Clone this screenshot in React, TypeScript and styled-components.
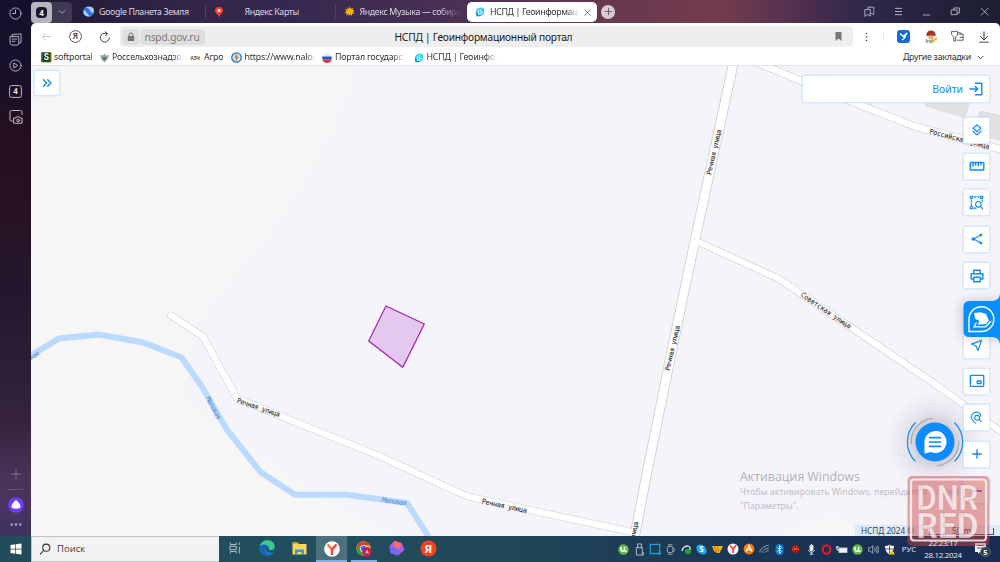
import React from "react";
import styled, { createGlobalStyle } from "styled-components";

const GlobalStyle = createGlobalStyle`
  * { box-sizing: border-box; }
  html, body { margin: 0; padding: 0; }
  body { width: 1000px; height: 562px; overflow: hidden; font-family: "Noto Sans", sans-serif; }
  svg { display: block; flex: none; }
`;

const UI = `"Noto Sans", sans-serif`;
const BLUE = "#0d8bff";

const Desktop = styled.div`
  display: grid;
  grid-template-rows: 536px 26px;
  width: 1000px;
  height: 562px;
  overflow: hidden;
`;

const Browser = styled.div`
  display: grid;
  grid-template-columns: 31px 969px;
  min-height: 0;
  background: linear-gradient(90deg, #15122a 0, #241c38 70px, #33264a 200px, #36294f 300px, #4a3053 450px, #66384f 590px, #733c4e 720px, #5a3350 780px, #33294a 850px, #26233e 920px, #1d1f33 1000px);
`;

const Rail = styled.aside`
  display: flex;
  flex-direction: column;
  align-items: center;
  padding-top: 6px;
  color: #bdb9c6;
  background: linear-gradient(180deg, #14122a 0, #15112a 60px, #240f1f 130px, #281222 200px, #23182f 300px, #35233d 420px, #4a3458 480px, #473560 510px, #3d3160 536px);
`;

const RailItem = styled.div<{ $h: number }>`
  display: flex;
  align-items: center;
  justify-content: center;
  height: ${(p) => p.$h}px;
`;

const RailSpacer = styled.div`
  flex: 1;
`;

const RailRule = styled.div`
  width: 15px;
  height: 1px;
  background: #6a5777;
`;

const Main = styled.div`
  display: grid;
  grid-template-rows: 23px 27px 16px 470px;
  min-width: 0;
`;

const TabStrip = styled.div`
  display: flex;
  align-items: center;
  color: #dcd8e2;
  font: 8.8px/12px ${UI};
  letter-spacing: -0.36px;
`;

const TabGroup = styled.div`
  display: flex;
  align-items: center;
  width: 41px;
  height: 21px;
  margin: 1px 0 0 0;
  border-radius: 4px;
  background: rgba(255, 255, 255, 0.13);
`;

const GroupChip = styled.div`
  display: flex;
  align-items: center;
  justify-content: center;
  width: 21px;
  height: 21px;
  border-radius: 4px;
  background: #b7b4be;
`;

const GroupCount = styled.div`
  width: 11px;
  height: 11px;
  border-radius: 4px;
  background: #1c1730;
  color: #fff;
  font: bold 8px/11px ${UI};
  letter-spacing: 0;
  text-align: center;
`;

const GroupArrow = styled.div`
  display: flex;
  flex: 1;
  justify-content: center;
  color: #a59fb2;
`;

const Tab = styled.div<{ $w: number; $pad: number; $gap: number; $line?: boolean }>`
  display: flex;
  align-items: center;
  width: ${(p) => p.$w}px;
  height: 13px;
  padding-left: ${(p) => p.$pad}px;
  gap: ${(p) => p.$gap}px;
  border-right: 1px solid ${(p) => (p.$line ? "#4f4264" : "transparent")};
  overflow: hidden;
  white-space: nowrap;
`;

const TabText = styled.span<{ $fade?: string; $w?: number }>`
  display: block;
  overflow: hidden;
  white-space: nowrap;
  width: ${(p) => (p.$w ? p.$w + "px" : "auto")};
  ${(p) => p.$fade && `mask-image: linear-gradient(90deg, #000 ${p.$fade}, transparent);`}
`;

const ActiveTab = styled.div`
  display: flex;
  align-items: center;
  width: 130px;
  height: 20px;
  padding-left: 8px;
  gap: 5px;
  margin-top: 1px;
  border-radius: 5px;
  background: #fff;
  color: #333;
`;

const NewTab = styled.div`
  display: flex;
  align-items: center;
  justify-content: center;
  width: 14px;
  height: 14px;
  margin-left: 4px;
  border-radius: 50%;
  background: #d6cbd3;
  color: #554a55;
`;

const WindowControls = styled.div`
  display: flex;
  align-items: center;
  gap: 17.8px;
  margin-left: auto;
  padding-right: 10px;
  color: #c9c6d0;
`;

const AddressBar = styled.div`
  display: flex;
  align-items: center;
  padding-left: 10px;
  border-radius: 5px 5px 0 0;
  background: #fff;
  color: #333;
`;

const NavIcons = styled.div`
  display: flex;
  align-items: center;
  gap: 17px;
  width: 79px;
`;

const UrlField = styled.div`
  display: flex;
  align-items: center;
  width: 733px;
  height: 21px;
  border-radius: 4px;
  background: #eee;
`;

const Lock = styled.div`
  display: flex;
  align-items: center;
  justify-content: center;
  width: 17px;
  height: 16px;
  margin-left: 2px;
  border-radius: 4px;
  background: #dfdfdf;
  color: #777;
`;

const Host = styled.div`
  width: 65px;
  height: 16px;
  margin-left: 1px;
  padding-left: 4.5px;
  border-radius: 4px;
  background: #dfdfdf;
  color: #777;
  font: 10.1px/16px ${UI};
  letter-spacing: -0.1px;
`;

const PageTitle = styled.div`
  margin-left: 189.5px;
  color: #1a1a1a;
  font: 10.2px/20px ${UI};
  letter-spacing: -0.22px;
  white-space: nowrap;
`;

const FieldEnd = styled.div`
  margin: 0 10px 0 auto;
`;

const Extensions = styled.div`
  display: flex;
  align-items: center;
  justify-content: space-between;
  flex: 1;
  padding: 0 10px 0 11px;
`;

const Bookmarks = styled.div`
  display: flex;
  align-items: flex-start;
  padding: 1px 16px 0 10px;
  border-bottom: 1px solid #e4e4e8;
  background: #fff;
  color: #333;
  font: 8.8px/13px ${UI};
  letter-spacing: -0.2px;
`;

const Bookmark = styled.div<{ $w: number; $gap?: number }>`
  display: flex;
  align-items: center;
  width: ${(p) => p.$w}px;
  height: 13px;
  gap: ${(p) => p.$gap ?? 2.5}px;
`;

const OtherBookmarks = styled.div`
  display: flex;
  align-items: center;
  gap: 6px;
  height: 13px;
  margin-left: auto;
  letter-spacing: -0.25px;
`;

const MapView = styled.div`
  position: relative;
  overflow: hidden;
  background: #f6f6f6;
`;

const Panel = styled.div`
  display: flex;
  align-items: center;
  justify-content: center;
  border: 1px solid #d3e7fd;
  border-radius: 2.5px;
  background: #fff;
  box-shadow: 0 0 2px rgba(120, 170, 230, 0.3);
  color: ${BLUE};
`;

const ExpandButton = styled(Panel)`
  position: absolute;
  left: 3px;
  top: 4px;
  width: 26px;
  height: 26px;
`;

const LoginBar = styled(Panel)`
  position: absolute;
  right: 10px;
  top: 9px;
  width: 188px;
  height: 28px;
  justify-content: flex-end;
  gap: 6px;
  padding: 0 6px 1px 0;
  font: 10.4px/14px ${UI};
`;

const Tools = styled.div<{ $top: number }>`
  position: absolute;
  right: 10px;
  top: ${(p) => p.$top}px;
  display: flex;
  flex-direction: column;
  gap: 9.4px;
`;

const Tool = styled(Panel)`
  width: 27px;
  height: 27px;
`;

const SideTab = styled.div`
  position: absolute;
  right: 0;
  top: 226px;
  filter: drop-shadow(-2px 0 6px rgba(60, 50, 80, 0.25));
`;

const Chat = styled.div`
  position: absolute;
  right: 13px;
  top: 324px;
`;

const Activation = styled.div`
  position: absolute;
  left: 709px;
  top: 403px;
  color: #bbbabf;
  font: 8.75px/13.5px "Open Sans", sans-serif;
  letter-spacing: 0.03px;
  white-space: pre;
`;

const ActivationTitle = styled.div`
  margin-bottom: 1px;
  color: #b2b1b6;
  font-size: 12.3px;
  line-height: 16px;
`;

const ScaleBar = styled.div`
  position: absolute;
  right: 0;
  bottom: 0;
  display: flex;
  align-items: center;
  width: 145px;
  height: 11px;
  padding-left: 6px;
  background: #dcebfb;
  color: #3a404a;
  font: 8.2px/11px ${UI};
  white-space: nowrap;
`;

const Ruler = styled.div`
  width: 65px;
  height: 7px;
  margin-left: 15px;
  margin-top: 1px;
  border: 1px solid #4b5460;
  border-top: 0;
  line-height: 5px;
  text-align: center;
`;

const Stamp = styled.div`
  position: absolute;
  left: 907px;
  top: 475px;
  z-index: 3;
`;

const StampLetters = styled.g`
  font: bold 35px Roboto, sans-serif;
  fill: #fff;
  fill-opacity: 0.7;
  stroke: rgba(140, 70, 75, 0.35);
  stroke-width: 0.5px;
`;

const Taskbar = styled.div`
  display: flex;
  align-items: stretch;
  background: linear-gradient(90deg, #224b5b 0, #234e5d 330px, #214659 500px, #1c3a54 680px, #193055 850px, #182b53 1000px);
`;

const Start = styled.div`
  display: flex;
  align-items: center;
  justify-content: center;
  width: 31px;
`;

const Search = styled.div`
  display: flex;
  align-items: center;
  gap: 6.5px;
  width: 187.5px;
  padding-left: 6.5px;
  border: 1px solid #bfc3c4;
  border-right: 0;
  background: #f2f2f2;
  color: #3d3d3d;
  font: 9.5px/14px "Open Sans", sans-serif;
`;

const TaskButton = styled.div<{ $on?: boolean; $run?: boolean }>`
  display: flex;
  align-items: center;
  justify-content: center;
  width: ${(p) => (p.$on ? 31 : p.$run ? 26 : 31)}px;
  margin: 0 ${(p) => (p.$run ? 3.2 : 0.7)}px;
  padding-top: ${(p) => (p.$on || p.$run ? 2 : 0)}px;
  border-bottom: 2px solid ${(p) => (p.$on || p.$run ? "#76b5e8" : "transparent")};
  background: ${(p) => (p.$on ? "#4d707d" : "transparent")};
  background-clip: padding-box;
`;

const Tray = styled.div`
  display: flex;
  align-items: center;
  margin-left: auto;
  color: #e8edf2;
`;

const TrayIcon = styled.div`
  display: flex;
  align-items: center;
  justify-content: center;
  width: 15.63px;
`;

const Lang = styled.div`
  width: 24px;
  font: 7.8px/12px "Open Sans", sans-serif;
  text-align: center;
`;

const Clock = styled.div`
  position: relative;
  z-index: 4;
  width: 44px;
  font: 7.9px/12px "Open Sans", sans-serif;
  letter-spacing: -0.25px;
  text-align: center;
`;

const Notices = styled.div`
  display: flex;
  justify-content: center;
  width: 35px;
`;

type P = { children?: React.ReactNode; s?: number; w?: number; color?: string; sw?: number; vb?: string };
const Line = ({ children, s = 14, w, color = "currentColor", sw = 1, vb = "0 0 14 14" }: P) => (
  <svg width={w ?? s} height={s} viewBox={vb} fill="none" stroke={color} strokeWidth={sw} strokeLinejoin="round" strokeLinecap="round">
    {children}
  </svg>
);

const Portal = ({ s = 10 }: { s?: number }) => (
  <svg width={s} height={s} viewBox="0 0 10 10">
    <path d="M3 1Q7 0 9 1.500q.8 3-.2 5.500Q7 9.500 1.500 9.300.3 6 1 3.500Z" fill="#3fd0fb" />
    <path d="M1 4.500Q.6 7 1.500 9.300 5 9.400 7 8.500L3.500 7.500Z" fill="#1a8df2" />
    <path d="M3.500 3v4.300h3.300M5.300 2.300v3.200h2.500" stroke="#d9f8ff" strokeWidth=".9" fill="none" />
  </svg>
);

const Label = ({ x, y, a, len, c = "#333", children }: { x: number; y: number; a: number; len: number; c?: string; children: string }) => (
  <text
    transform={`translate(${x} ${y}) rotate(${a})`}
    y={2.2}
    textAnchor="middle"
    textLength={len}
    fontFamily="'DejaVu Sans Mono', monospace"
    fontSize={6.7}
    fill={c}
    stroke={c}
    strokeWidth={0.12}
    xmlSpace="preserve"
  >
    {children}
  </text>
);

const roads = [
  { d: "M171 315.500 203 336.500 237 398.500 382 457 466 496 636 533", w: 6, c: "#dcdcdf" },
  { d: "M695 240.500 778 278.300 935 384 1003 433", w: 6, c: "#d8d8db" },
  { d: "M740 56 765 66 860 105 915 126.500 1003 150", w: 6.500, c: "#d8d8db" },
  { d: "M735 56 695 240 673 345 645.500 480 634 540", w: 8.600, c: "#cbcbce" },
];

const MapDrawing = () => (
  <svg width="969" height="470" viewBox="31 66 969 470">
    <path d="M352 66v16l-17 43-35 65-30 45-38 42-28 38-14 30-6 50 31 30 47 30 58 45 80 36h380l52-24 38 24H1000V66Z" fill="#f5f4fb" />
    <path d="M926 106 965 117.500 970 100 930 90ZM980 111 1001 116V140L974 133Z" fill="#e2e2e2" stroke="#d6d6d6" strokeWidth=".7" />
    <path d="M27 358 59 338.500 99 334.500 143 342.500 181.500 357.500 201.500 386 226.500 429 260.500 472 295 494.800H347L407 503 430 539" fill="none" stroke="#bbdaff" strokeWidth="6" />
    {roads.map((r) => (
      <path key={r.d} d={r.d} fill="none" stroke={r.c} strokeWidth={r.w + 1.600} strokeLinejoin="round" strokeLinecap="round" />
    ))}
    {roads.map((r) => (
      <path key={r.d} d={r.d} fill="none" stroke="#fff" strokeWidth={r.w} strokeLinejoin="round" strokeLinecap="round" />
    ))}
    <path d="M386 306 424.300 324 402.800 367.300 368.700 341Z" fill="#e5c8ee" stroke="#a51fb8" strokeWidth="1.200" />
    <Label x={258.500} y={407.5} a={19} len={45}>Речная улица</Label>
    <Label x={504.500} y={506} a={12} len={46}>Речная улица</Label>
    <Label x={714} y={152} a={-77} len={46}>Речная улица</Label>
    <Label x={672.500} y={348} a={-77} len={46}>Речная улица</Label>
    <Label x={631.500} y={544} a={-78} len={46}>Речная улица</Label>
    <Label x={826} y={310.500} a={34} len={59}>Советская улица</Label>
    <Label x={959.5} y={139} a={14.5} len={62}>Российская улица</Label>
    <Label x={213.500} y={408} a={62} len={25} c="#5d97d3">Меловая</Label>
    <Label x={394.500} y={501.500} a={8} len={25} c="#5d97d3">Меловая</Label>
    <Label x={28} y={359} a={-30} len={25} c="#5d97d3">Меловая</Label>
  </svg>
);

const Uto = () => (
  <svg width="11" height="11" viewBox="0 0 11 11">
    <circle cx="5.500" cy="5.500" r="5.200" fill="#65b944" />
    <path d="M3 3v2.500Q3.200 7.500 5.500 7.200 7 7 6.500 3M6.800 6.500 8.500 7.800" stroke="#fff" strokeWidth="1.500" fill="none" />
  </svg>
);

const trayIcons: React.ReactNode[] = [
  <Uto />,
  <Line s={13} color="#b9c6cf"><path d="M4 5h6v8H4ZM5 5V1h4v4M11 10v3" /></Line>,
  <Line s={12} color="#17a5e8" sw={1.4}><path d="M1.500 1.500h11v11h-11z" strokeDasharray="2 1" /><path d="M10 12h4M12 10v4" /></Line>,
  <Line s={11} color="#b9c6cf"><rect x="3" y="3" width="7" height="8" rx="2" /><path d="M4 1h5M4 13h5M11 5q3 2 0 5" /></Line>,
  <svg width="11" height="11" viewBox="0 0 11 11"><path d="M1 7Q2 2 7 2q3 1 2 4L4 7" fill="none" stroke="#dce3e7" strokeWidth="1.300" /><circle cx="7" cy="7.500" r="2.800" fill="#20a43b" /></svg>,
  <svg width="11" height="11" viewBox="0 0 11 11"><circle cx="4" cy="4" r="3.600" fill="#18aaf0" /><circle cx="7" cy="7" r="3.600" fill="#18aaf0" /><circle cx="5.500" cy="5.500" r="4.300" fill="#18aaf0" /><text x="5.500" y="8.300" textAnchor="middle" fontSize="8" fontWeight="bold" fontFamily="Open Sans" fill="#fff">S</text></svg>,
  <svg width="11" height="9" viewBox="0 0 11 9"><path d="M0 1h11L7.500 8H5L2 6Z" fill="#ffb100" /><path d="m2 1 3 6M5 1l2 5" stroke="#a36000" strokeWidth=".7" /></svg>,
  <svg width="12" height="12" viewBox="0 0 12 12"><circle cx="6" cy="6" r="5.500" fill="#fff" /><path d="M3 2.500 6 6v4M9 2.500 6 6" fill="none" stroke="#f33" strokeWidth="1.700" /></svg>,
  <svg width="12" height="12" viewBox="0 0 12 12"><circle cx="6" cy="6" r="5.400" fill="#ff7a00" /><path d="m3 8.500 3-6 3 6M4 7q3-2 4 1" fill="none" stroke="#fff" strokeWidth="1.200" /></svg>,
  <Line s={10} color="#aab8c6" sw={1.1}><path d="M1 11Q3 3 13 2M4 12q2-6 9-6M8 12q1-3 5-3" /></Line>,
  <svg width="9" height="11" viewBox="0 0 9 11"><rect x=".5" width="8" height="11" rx="4" fill="#0b7be0" /><path d="m2.500 3.500 4 4-2 2v-8l2 2-4 4" fill="none" stroke="#fff" strokeWidth=".8" /></svg>,
  <svg width="11" height="11" viewBox="0 0 11 11"><circle cx="5.500" cy="5" r="3.800" fill="#d8301a" /><path d="m1 2 9 7M10 2 1 9M5.500 1v9" stroke="#6b1010" /><path d="M4 4h3v2H4z" fill="#e8541e" /></svg>,
  <Line s={11} color="#e6ebef"><rect x="5" y="1" width="4" height="8" rx="2" fill="#e6ebef" /><path d="M3 8q4 6 8 0M7 11v2M5 13h4" /></Line>,
  <svg width="11" height="11" viewBox="0 0 11 11"><ellipse cx="5.500" cy="5.500" rx="3.800" ry="4.200" fill="none" stroke="#f01828" strokeWidth="2" /></svg>,
  <svg width="12" height="9" viewBox="0 0 12 9"><rect x="3" y="3" width="8" height="4.500" fill="#eef2f4" stroke="#cfd6db" strokeWidth=".8" /><path d="M1 1v4h2M0 2h3" stroke="#e8edf0" fill="none" /></svg>,
  <Uto />,
  <Line s={11} color="#b6c3cf"><path d="M1 5h2l3-3v10L3 9H1ZM8.500 5q1.500 2 0 4M10.500 3.500q2.500 3.500 0 7M12.500 2.500q3 4.500 0 9" /></Line>,
  <svg width="11" height="11" viewBox="0 0 11 11"><path d="M1 2q3 0 4.500-1.500Q7 2 10 2q0 6-4.500 8.500Q1 8 1 2" fill="#fff" /><path d="M5.500 1v9M1 5h9" stroke="#26384f" strokeWidth=".8" /><path d="m8 5.500 3 5H5Z" fill="#ffc400" /></svg>,
];

const toolIcons: React.ReactNode[] = [
  <Line s={12} color={BLUE} sw={1.3}><path d="m7 1 4.500 4L7 9 2.500 5ZM2.200 8.500 7 12.700l4.800-4.200" /></Line>,
  <Line s={14} w={16} vb="0 0 16 14" color={BLUE} sw={1.4}><rect x="1.200" y="3.500" width="13.600" height="7.500" rx=".8" /><path d="M4 4v3M6.600 4v2M9.300 4v3M12 4v2" /></Line>,
  <Line s={15} color={BLUE} sw={1.05}><circle cx="2.200" cy="2.200" r="1.200" /><circle cx="11.800" cy="2.200" r="1.200" /><circle cx="2.200" cy="11.800" r="1.200" /><path d="M4.500 1.700h2M8 1.700h1.500M2.200 4.500v2M2.200 8v1.500M4.500 12.300h2M12.300 4.500v2" /><circle cx="8.800" cy="8.700" r="2.600" /><path d="m10.700 10.700 2 2.300" /></Line>,
  <Line s={12} color={BLUE} sw={1.3}><path d="M11 2.500 3 7l8 4.500" /><circle cx="11.500" cy="2.300" r="1" fill={BLUE} /><circle cx="2.600" cy="7" r="1.300" fill={BLUE} /><circle cx="11.500" cy="11.700" r="1" fill={BLUE} /></Line>,
  <Line s={14} color={BLUE} sw={1.4}><path d="M3.800 4.500V1.300h6.400v3.200M3.800 10H1.200V4.700h11.600V10h-2.600M3.800 8.200h6.400v4.500H3.800Z" /></Line>,
];

const lowerTools: React.ReactNode[] = [
  <Line s={13} color={BLUE} sw={1.2}><path d="M12.500 1.500 8.500 12.500 6.500 7.500 1.500 5.500Z" /></Line>,
  <Line s={14} w={16} vb="0 0 16 14" color={BLUE} sw={1.3}><rect x="1.300" y="1.300" width="13.400" height="11" rx=".7" /><rect x="8.300" y="7" width="3.800" height="2.500" /></Line>,
  <Line s={13} color={BLUE} sw={1.2}><path d="M4 11.500Q-.5 7 2.500 3.500 6-.500 10 2.500q1.500 1 1.700 3M6 13l-1-.8" /><circle cx="7.700" cy="7.300" r="2.600" /><path d="m9.800 9.300 2.200 2.200" /></Line>,
  <Line s={12} color={BLUE} sw={1.5}><path d="M2 7h10M7 2v10" /></Line>,
  <Line s={12} color="#0066dd" sw={1.8}><path d="M2 7h10" /></Line>,
];

export default function App() {
  return (
    <>
      <GlobalStyle />
      <Desktop>
        <Browser>
          <Rail>
            <RailItem $h={14}><Line s={13}><circle cx="7" cy="7" r="6" /><path d="M7 3.500V7H4" /></Line></RailItem>
            <RailItem $h={38}><Line s={13}><path d="M3.500 3.500V1.500L13 1v9l-2 1M1.500 3.800h9V12l-1 1h-7l-1-1ZM3.500 6.500h5M3.500 9h3" /></Line></RailItem>
            <RailItem $h={14}><Line s={13}><circle cx="7" cy="7" r="6" /><path d="m5.500 4.500 4 2.500-4 2.500Z" /></Line></RailItem>
            <RailItem $h={38}>
              <svg width="13" height="13" viewBox="0 0 13 13"><rect x=".6" y=".6" width="11.800" height="11.800" rx="2" fill="none" stroke="currentColor" /><text x="6.500" y="9.400" textAnchor="middle" fontFamily="Open Sans" fontWeight="bold" fontSize="8" fill="#e6e3ea">4</text></svg>
            </RailItem>
            <RailItem $h={14}><Line s={14}><path d="M3.500 11H2.500Q1 11 1 9.500V2Q1 .5 2.500.5h9Q13 .5 13 2v2.500M5 8h2l.8-1.200h2.600L11.200 8H13v5.200H5Z" /><circle cx="9.100" cy="10.400" r="1.300" /></Line></RailItem>
            <RailSpacer />
            <RailItem $h={30}><Line s={12} color="#8d7f9a"><path d="M1.500 7h11M7 1.500v11" /></Line></RailItem>
            <RailRule />
            <RailItem $h={30}>
              <svg width="16" height="16" viewBox="0 0 16 16"><circle cx="8" cy="8" r="7.800" fill="#7239ff" /><path d="M8 3.200q1.600 0 4.500 5.500.8 3-4.500 3T3.500 8.700Q6.400 3.200 8 3.200" fill="#fff" /></svg>
            </RailItem>
            <RailItem $h={8}>
              <svg width="12" height="3" viewBox="0 0 12 3" fill="#aaa2b8"><circle cx="1.700" cy="1.500" r="1.300" /><circle cx="6" cy="1.500" r="1.300" /><circle cx="10.300" cy="1.500" r="1.300" /></svg>
            </RailItem>
            <RailItem $h={8} />
          </Rail>

          <Main>
            <TabStrip>
              <TabGroup>
                <GroupChip><GroupCount>4</GroupCount></GroupChip>
                <GroupArrow><Line s={8}><path d="m2 5 5 4 5-4" strokeWidth="1.700" /></Line></GroupArrow>
              </TabGroup>
              <Tab $w={134} $pad={11} $gap={5} $line>
                <svg width="11" height="11" viewBox="0 0 11 11"><circle cx="5.500" cy="5.500" r="5.300" fill="#2d75e5" /><path d="M.5 4Q3 5 4 7t3 3.300Q2 11 .5 7M3 1l3 2 2 3 2.500 1.500Q12 2 8 .8" fill="#a9d0ff" /></svg>
                <TabText>Google Планета Земля</TabText>
              </Tab>
              <Tab $w={130} $pad={8} $gap={20.5} $line>
                <svg width="10" height="12" viewBox="0 0 10 12"><path d="M5 1Q9 1 9 4.500 9 7 6 9L5 11.500 4 9Q1 7 1 4.500 1 1 5 1" fill="#f8402b" /><circle cx="5" cy="4.500" r="1.500" fill="#fff" /></svg>
                <TabText>Яндекс Карты</TabText>
              </Tab>
              <Tab $w={131} $pad={7.5} $gap={5}>
                <svg width="11" height="11" viewBox="0 0 11 11"><path d="m1 3 3 1L2.500 1 5 3 5.500.5 7 3l2-1.500L8.500 4l2 .5-1.500 1.500 1.500 2-2.500-.5L8 10 6 8l-1 2.500L4.500 8 2 9.500l1-2.500H0l2.500-1.500Z" fill="#ffb500" /></svg>
                <TabText $w={101} $fade="78%">Яндекс Музыка — собираем</TabText>
              </Tab>
              <ActiveTab>
                <Portal s={10} />
                <TabText $w={89} $fade="86%">НСПД | Геоинформационный</TabText>
                <Line s={7} color="#555" sw={1.5}><path d="M1.500 1.500 12.500 12.500M12.500 1.500 1.500 12.500" /></Line>
              </ActiveTab>
              <NewTab><Line s={9} sw={1.3}><path d="M2 7h10M7 2v10" /></Line></NewTab>
              <WindowControls>
                <Line s={11}><path d="M1.500 4.500h6.500V13L4.800 10.500 1.500 13ZM5 4V1.500h7.500v9.300L9 9.500" /></Line>
                <Line s={11} sw={1.1}><path d="M3 3h8M3 7h8M3 11h8" /></Line>
                <Line s={11}><path d="M3 11.500h8" /></Line>
                <Line s={11}><path d="M2 5h7v6H2ZM5 5V2.500h7V9H9" /></Line>
                <Line s={11}><path d="m3 3 8.500 8.500M11.500 3 3 11.500" /></Line>
              </WindowControls>
            </TabStrip>

            <AddressBar>
              <NavIcons>
                <Line s={11} color="#c4c4c4" sw={1.2}><path d="M12 7H2M6 2.500 2 7l4 4.500" /></Line>
                <svg width="13" height="13" viewBox="0 0 13 13"><circle cx="6.500" cy="6.500" r="5.900" fill="none" stroke="#444" strokeWidth=".9" /><text x="6.400" y="9.400" textAnchor="middle" fontFamily="Open Sans" fontSize="8" fontWeight="600" fill="#333">Я</text></svg>
                <Line s={12} color="#333" sw={1.1}><path d="M12 8.200A5.200 5.200 0 1 1 8 2.700L9.500 3M7.300.8 9.700 3 7.600 5.400" /></Line>
              </NavIcons>
              <UrlField>
                <Lock><svg width="8" height="10" viewBox="0 0 8 10"><rect x=".8" y="4" width="6.400" height="5" rx=".5" fill="currentColor" /><path d="M2.200 4V2.700q0-1.700 1.800-1.700t1.800 1.700V4" fill="none" stroke="currentColor" /></svg></Lock>
                <Host>nspd.gov.ru</Host>
                <PageTitle>НСПД | Геоинформационный портал</PageTitle>
                <FieldEnd><svg width="9" height="11" viewBox="0 0 9 11"><path d="M1.500 1h6v9l-3-2.500-3 2.500Z" fill="#777" /></svg></FieldEnd>
              </UrlField>
              <Extensions>
                <svg width="5" height="10" viewBox="0 0 5 10" fill="#444"><circle cx="2.500" cy="1.500" r=".8" /><circle cx="2.500" cy="5" r=".8" /><circle cx="2.500" cy="8.500" r=".8" /></svg>
                <svg width="1" height="9"><rect width="1" height="9" fill="#eaeaea" /></svg>
                <svg width="13" height="13" viewBox="0 0 13 13"><rect width="13" height="13" rx="3" fill="#176bd8" /><path d="m3 3.500 3.500 3L10 3 7 8.500 5 10" fill="none" stroke="#fff" strokeWidth="1.400" /></svg>
                <svg width="14" height="14" viewBox="0 0 14 14"><path d="M2.500 4Q3 .5 7 .5T11.500 4v2h-9Z" fill="#a23a28" /><path d="M4.500 5.500h5V9h-5Z" fill="#efae77" /><path d="m1 9 4 1-1 3H2ZM5 10l4-1v4H5Z" fill="#9eabb8" /><path d="m8 12 5-4" stroke="#eebb18" strokeWidth="2" /></svg>
                <Line s={13} color="#555"><path d="M1 1.500h6v4L5 7.500V12H3V7.500L1 5.500ZM8.500 4.500H13V11H7M7.500 3h3l1 1.500M10 8h3" /></Line>
                <Line s={12} color="#333" sw={1.1}><path d="M7 1v9M3 6.500 7 10.500 11 6.500M2 13h10" /></Line>
              </Extensions>
            </AddressBar>

            <Bookmarks>
              <Bookmark $w={59}>
                <svg width="10.500" height="10.500" viewBox="0 0 10 10"><rect width="10" height="10" rx="1" fill="#4f803e" /><rect x="1.500" y="1" width="7" height="8" fill="#193115" /><text x="5" y="8" textAnchor="middle" fontFamily="Roboto" fontSize="8" fontWeight="bold" fill="#fff">S</text></svg>
                <TabText>softportal</TabText>
              </Bookmark>
              <Bookmark $w={90} $gap={3}>
                <svg width="9" height="10" viewBox="0 0 9 10"><path d="m0 2 3 .5L4.500.5 6 2.500 9 2 7.500 6.500 5.500 8l-1 2-1-2-2-1.500Z" fill="#98a3a0" /><path d="M3 4h3v3H3z" fill="#43855b" /></svg>
                <TabText $w={71} $fade="85%">Россельхознадзор</TabText>
              </Bookmark>
              <Bookmark $w={41} $gap={4}>
                <svg width="10" height="6" viewBox="0 0 10 6"><text x="0.5" y="5" textLength="9" fontFamily="Open Sans" fontWeight="bold" fontSize="4.500" fill="#444">АЗЧ</text></svg>
                <TabText>Агро</TabText>
              </Bookmark>
              <Bookmark $w={91}>
                <svg width="11" height="11" viewBox="0 0 11 11"><circle cx="5.500" cy="5.500" r="4.700" fill="#d9e4ee" stroke="#1e72b8" strokeWidth="1.300" /><path d="M5.500 2 7.500 5 5.500 9 3.500 5Z" fill="#c28b50" /></svg>
                <TabText $w={70} $fade="88%">https://www.nalog.ru</TabText>
              </Bookmark>
              <Bookmark $w={92} $gap={3}>
                <svg width="10" height="10" viewBox="0 0 10 10"><path d="M.3 3.500Q2 0 5 0t4.700 3.500Z" fill="#e8e8ed" /><path d="M.3 3.500h9.400v3H.3Z" fill="#1d5cb5" /><path d="M.3 6.500h9.400Q8 10 5 10T.3 6.500" fill="#e52b43" /></svg>
                <TabText $w={70} $fade="82%">Портал государственных</TabText>
              </Bookmark>
              <Bookmark $w={90} $gap={2.5}>
                <Portal s={10} />
                <TabText $w={70} $fade="82%">НСПД | Геоинформац</TabText>
              </Bookmark>
              <OtherBookmarks>Другие закладки<Line s={7} color="#333"><path d="m2 4.500 5 5 5-5" strokeWidth="1.800" /></Line></OtherBookmarks>
            </Bookmarks>

            <MapView>
              <MapDrawing />
              <ExpandButton>
                <Line s={10} color={BLUE} sw={2}><path d="m2 2.500 4.500 4.500L2 11.500M8 2.500l4.500 4.500L8 11.500" /></Line>
              </ExpandButton>
              <LoginBar>
                Войти
                <Line s={14} color={BLUE} sw={1.4}><path d="M6.500 1.200h6.300v11.600H6.500M.8 7h7.700M6.200 4.500 8.700 7 6.200 9.500" /></Line>
              </LoginBar>
              <Chat>
                <svg width="104" height="104" viewBox="-52 -52 104 104" fill="none">
                  <defs>
                    <radialGradient id="halo">
                      <stop offset=".3" stopColor="#5a5568" stopOpacity=".3" />
                      <stop offset=".6" stopColor="#5a5568" stopOpacity=".1" />
                      <stop offset="1" stopColor="#5a5568" stopOpacity="0" />
                    </radialGradient>
                  </defs>
                  <circle r="50" fill="url(#halo)" />
                  <circle r="19.500" fill={BLUE} />
                  <path d="M-19.500-19.500A27.500 27.500 0 0 0-19.500 19.500M19.500-19.500A27.500 27.500 0 0 1 19.500 19.500" stroke={BLUE} strokeWidth="1.200" />
                  <path d="M-23.800 2A24 24 0 0 1-2-23.700M23.800-1.500A24 24 0 0 1 2 23.800" stroke="#aaa8b0" strokeWidth="1.200" />
                  <path d="M-10.500 11.500V0A11 11 0 1 1-4 10Z" fill="#fff" />
                  <path d="M-5.500-4.300H5.500M-5.500 0H5.500M-5.500 4.300H5.500" stroke={BLUE} strokeWidth="1.700" strokeLinecap="round" />
                </svg>
              </Chat>
              <Tools $top={50.5}>{toolIcons.map((icon, i) => <Tool key={i}>{icon}</Tool>)}</Tools>
              <Tools $top={265.5}>{lowerTools.map((icon, i) => <Tool key={i}>{icon}</Tool>)}</Tools>
              <Activation>
                <ActivationTitle>Активация Windows</ActivationTitle>
                {"Чтобы активировать Windows, перейдите в раздел\n\"Параметры\"."}
              </Activation>
              <SideTab>
                <svg width="37" height="54" viewBox="0 0 37 54">
                  <path d="M37 2q-1 7-8 7H6.500Q.5 9 .5 15v24q0 6 6 6h22.500q7 0 8 7Z" fill="#078eff" />
                  <path d="M6 39.500V27A12.400 12.400 0 1 1 18 39.500Z" fill="none" stroke="#fff" strokeWidth="1.400" />
                  <path d="M11 21 17.500 20.300 23 22l1.300 3 1.500 3.500-3 3.500-8 .7 1.500-4-4-1.700Z" fill="#fff" />
                  <path d="M13.500 30.500 11 34.800H22.500L28 29" fill="none" stroke="#fff" strokeWidth="1.300" />
                </svg>
              </SideTab>
              <ScaleBar>НСПД 2024 ©<Ruler>50 m</Ruler></ScaleBar>
            </MapView>
          </Main>
        </Browser>

        <Taskbar>
          <Start><svg width="12" height="12" viewBox="0 0 12 12" fill="#fff"><path d="M.5 2 5.300 1.300v4.400H.5ZM6 1.200 11.500.4v5.300H6ZM.5 6.400h4.800v4.300L.5 10ZM6 6.400h5.500v5.200L6 10.800Z" /></svg></Start>
          <Search><Line s={12} color="#333" sw={1.2}><circle cx="8.500" cy="5.500" r="4.200" /><path d="M5.500 8.500 1.500 13" /></Line>Поиск</Search>
          <TaskButton><Line s={12} color="#c5d2d6"><path d="M1.500 1v2h7V1M1.500 5h7v4h-7ZM1.500 13v-2h7v2M12 1v2M12 6v7" /></Line></TaskButton>
          <TaskButton><svg width="16" height="16" viewBox="0 0 16 16"><circle cx="8" cy="8" r="7.700" fill="#1280d4" /><path d="M1 6Q3 0 9 .3q6 .5 6.700 6Q15 11 10 10.500q1-4-3-5-4-.5-6 .5" fill="#38c98b" /><path d="M1 6q4-3 8 0l.8 3Q6 6 5.500 10.500 6 14 11 15 2 17 .4 10Z" fill="#1265b5" /><path d="M8 7q-2 2 0 4.500 3 2 6.500.5l1-2.500-5 1Q8.500 9 9.500 7.500Z" fill="#244e66" /></svg></TaskButton>
          <TaskButton><svg width="15" height="13" viewBox="0 0 15 13"><path d="M.5.5h5L7 2h7.500v10.500H.5Z" fill="#ffd45b" /><path d="M.5.500h5L7 2H.5Z" fill="#eda318" /><path d="M3 12.500V7.500h9v5h-2.500V10h-4v2.500Z" fill="#3597e0" /></svg></TaskButton>
          <TaskButton $on><svg width="16" height="16" viewBox="0 0 16 16"><circle cx="8" cy="8" r="7.800" fill="#fff" /><path d="m3.500 3.500 4.500 5" stroke="#ff8035" strokeWidth="2.400" /><path d="M12.500 3.500 8 8.500V14" fill="none" stroke="#ff3b35" strokeWidth="2.400" /></svg></TaskButton>
          <TaskButton $run><svg width="16" height="16" viewBox="0 0 16 16"><circle cx="7.500" cy="7.500" r="7.200" fill="#e8bf28" /><path d="M1.300 4A7.200 7.200 0 0 1 14 4.500H7.500L4.500 9Z" fill="#e04032" /><path d="M1.300 4 5 10 7 14.600A7.200 7.200 0 0 1 1.300 4" fill="#2f9b4e" /><circle cx="7.500" cy="7.500" r="3.500" fill="#fff" /><circle cx="7.500" cy="7.500" r="2.800" fill="#2f78df" /><circle cx="11" cy="11" r="4.800" fill="#c2185b" /><text x="11" y="13" textAnchor="middle" fontFamily="Roboto" fontSize="5.500" fill="#fff">A</text></svg></TaskButton>
          <TaskButton><svg width="16" height="16" viewBox="0 0 16 16"><path d="M5.500.7 13 3.500 15.500 10 9 15.500 1.500 13 .5 6Z" fill="#b45ae0" /><path d="M5.500.7 13 3.500 10 9 4 7Z" fill="#ff6679" /><path d="M.5 6 4 7 10 9 9 15.500 1.500 13Z" fill="#696ff5" /></svg></TaskButton>
          <TaskButton><svg width="17" height="17" viewBox="0 0 17 17"><circle cx="8.500" cy="8.500" r="8" fill="#fc3f1d" /><text x="8.300" y="12.600" textAnchor="middle" fontFamily="Roboto" fontWeight="bold" fontSize="11.500" fill="#fff">Я</text></svg></TaskButton>
          <Tray>
            {trayIcons.map((icon, i) => <TrayIcon key={i}>{icon}</TrayIcon>)}
            <Lang>РУС</Lang>
            <Clock>22:23:17<br />28.12.2024</Clock>
            <Notices>
              <svg width="18" height="18" viewBox="0 0 18 18"><path d="M1 3h11v9H6l-2 2v-2H1Z" fill="#f3f5f8" /><path d="M3 5.500h7M3 8h7" stroke="#465676" /><circle cx="11.500" cy="12" r="5" fill="#303a4b" stroke="#7b8592" strokeWidth=".6" /><text x="11.500" y="14.700" textAnchor="middle" fontFamily="Open Sans" fontWeight="bold" fontSize="7.500" fill="#fff">5</text></svg>
            </Notices>
          </Tray>
        </Taskbar>
      </Desktop>
      <Stamp>
        <svg width="84" height="73" viewBox="0 0 84 73">
          <rect x=".5" y="1" width="82" height="70" rx="5" fill="#cc4545" fillOpacity=".48" />
          <rect x="4" y="4.500" width="75" height="61" rx="3" fill="none" stroke="#fff" strokeOpacity=".8" strokeWidth="2.200" />
          <StampLetters>
            <text x="9.500" y="35" textLength="62" lengthAdjust="spacingAndGlyphs">DNR</text>
            <text x="9.500" y="63" textLength="62" lengthAdjust="spacingAndGlyphs">RED</text>
          </StampLetters>
        </svg>
      </Stamp>
    </>
  );
}
